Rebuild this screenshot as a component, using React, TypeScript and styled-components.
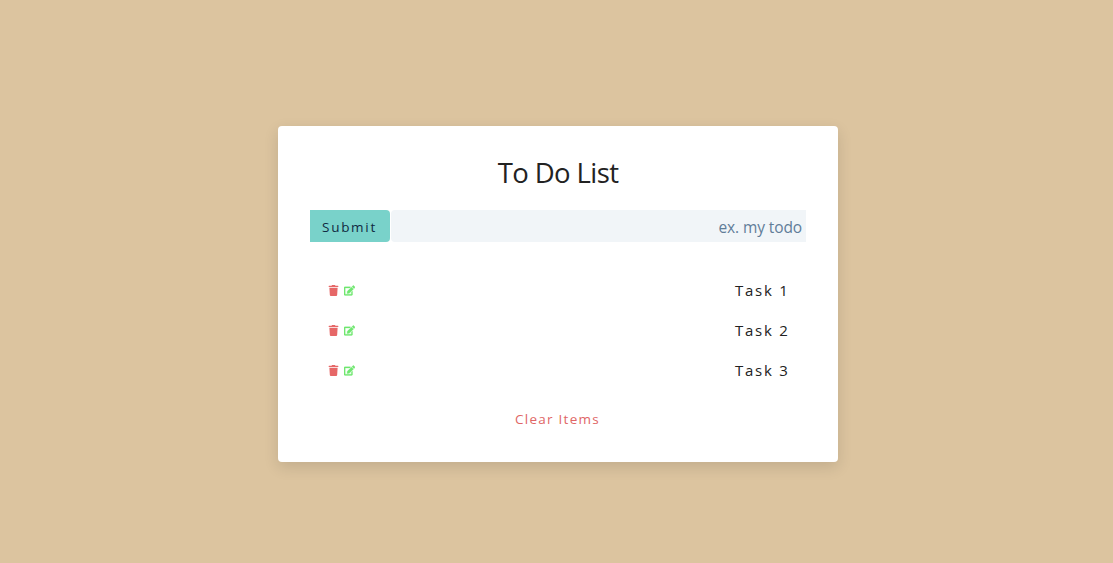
import React from 'react';
import styled, { createGlobalStyle } from 'styled-components';
import { FaTrash, FaEdit } from 'react-icons/fa';

const Global = createGlobalStyle`
  *, *::before, *::after { box-sizing: border-box; margin: 0; padding: 0; }
  body {
    margin: 0;
    background: #dcc49f;
    color: #222;
    font-family: "Segoe UI", "Open Sans", "Noto Sans", sans-serif;
    font-size: 14px;
    line-height: 1.5;
  }
`;
const Page = styled.main`
  min-height: 100vh;
  padding: 126px 0 0 278px;
`;
const Card = styled.section`
  width: 560px;
  height: 336px;
  padding: 32px;
  background: #fff;
  border-radius: 4px;
  box-shadow: 0 5px 15px rgba(0, 0, 0, 0.12);
`;
const Title = styled.h3`
  height: 32px;
  line-height: 29px;
  margin-bottom: 20px;
  text-align: center;
  font-weight: 400;
  font-size: 27.5px;
  letter-spacing: -0.6px;
`;
const Form = styled.form`
  display: flex;
  height: 32px;
`;
const Submit = styled.button`
  width: 80px;
  padding: 2px 1px 0 0;
  border: 0;
  border-radius: 0 4px 4px 0;
  background: #79d2ca;
  color: #102a42;
  font-family: inherit;
  font-size: 13.5px;
  letter-spacing: 1.7px;
`;
const Field = styled.input`
  flex: 1;
  min-width: 0;
  margin-left: 1px;
  padding: 1px 4px 0;
  border: 0;
  border-radius: 4px 0 0 4px;
  background: #f1f5f8;
  font-family: inherit;
  font-size: 15.5px;
  letter-spacing: -0.1px;
  text-align: right;
  &::placeholder { color: #617d98; opacity: 1; }
`;
const List = styled.div`
  margin-top: 32px;
`;
const Item = styled.article`
  display: flex;
  align-items: center;
  justify-content: space-between;
  height: 32px;
  margin-bottom: 8px;
  padding: 0 16.5px 0 18px;
`;
const Actions = styled.div`
  display: flex;
  gap: 5px;
`;
const EditIcon = styled(FaEdit)`
  stroke: #70e770;
  stroke-width: 14px;
`;
const TaskName = styled.p`
  font-size: 15px;
  letter-spacing: 1.75px;
`;
const Clear = styled.button`
  display: block;
  margin: 24px auto 0;
  padding-right: 1px;
  border: 0;
  background: none;
  color: #e06666;
  font-family: inherit;
  font-size: 13.5px;
  letter-spacing: 1.25px;
`;

export default function App() {
  return (
    <Page>
      <Global />
      <Card>
        <Title>To Do List</Title>
        <Form>
          <Submit type="button">Submit</Submit>
          <Field placeholder="ex. my todo" />
        </Form>
        <List>
          {['Task 1', 'Task 2', 'Task 3'].map((name) => (
            <Item key={name}>
              <Actions>
                <FaTrash size={11} color="#e66767" />
                <EditIcon size={11} color="#70e770" />
              </Actions>
              <TaskName>{name}</TaskName>
            </Item>
          ))}
        </List>
        <Clear>Clear Items</Clear>
      </Card>
    </Page>
  );
}
